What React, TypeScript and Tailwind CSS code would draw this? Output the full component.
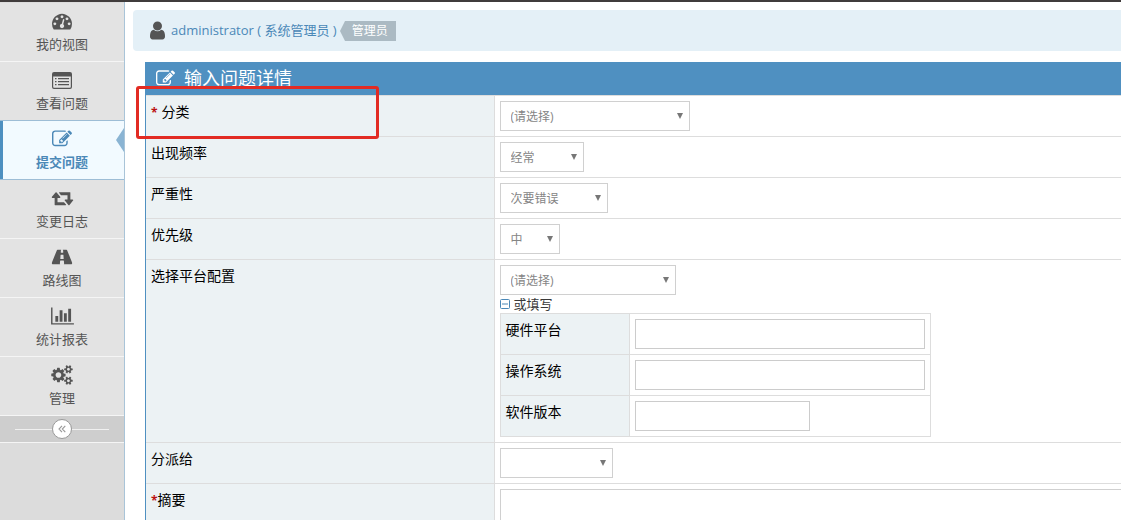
import { useState } from 'react';
import type { ReactNode } from 'react';
import clsx from 'clsx';

const EDIT_PATH =
  'M888 1184l116-116-152-152-116 116v56h96v96h56zm440-720q-16-16-33 1l-350 350q-17 17-1 33t33-1l350-350q17-17 1-33zm80 594v190q0 119-84.5 203.5t-203.5 84.5h-832q-119 0-203.5-84.5t-84.5-203.5v-832q0-119 84.5-203.5t203.5-84.5h832q63 0 117 25 15 7 18 23 3 17-9 29l-49 49q-14 14-32 8-23-6-45-6h-832q-66 0-113 47t-47 113v832q0 66 47 113t113 47h832q66 0 113-47t47-113v-126q0-13 9-22l64-64q15-15 35-7t20 29zm-96-738l288 288-672 672h-288v-288zm444 132l-92 92-288-288 92-92q28-28 68-28t68 28l152 152q28 28 28 68t-28 68z';

const DASHBOARD_PATH =
  'M384 1152q0-53-37.5-90.5t-90.5-37.5-90.5 37.5-37.5 90.5 37.5 90.5 90.5 37.5 90.5-37.5 37.5-90.5zm192-448q0-53-37.5-90.5t-90.5-37.5-90.5 37.5-37.5 90.5 37.5 90.5 90.5 37.5 90.5-37.5 37.5-90.5zm428 481l101-382q6-26-7.5-48.5t-38.5-29.5-48 6.5-30 39.5l-101 382q-60 5-107 43.5t-63 98.5q-20 77 20 146t117 89 146-20 89-117q16-60-6-117t-72-91zm660-33q0-53-37.5-90.5t-90.5-37.5-90.5 37.5-37.5 90.5 37.5 90.5 90.5 37.5 90.5-37.5 37.5-90.5zm-640-640q0-53-37.5-90.5t-90.5-37.5-90.5 37.5-37.5 90.5 37.5 90.5 90.5 37.5 90.5-37.5 37.5-90.5zm448 192q0-53-37.5-90.5t-90.5-37.5-90.5 37.5-37.5 90.5 37.5 90.5 90.5 37.5 90.5-37.5 37.5-90.5zm320 448q0 261-141 483-19 29-54 29h-1402q-35 0-54-29-141-221-141-483 0-182 71-348t191-286 286-191 348-71 348 71 286 191 191 286 71 348z';

const RETWEET_PATH =
  'M1344 1504q0 13-9.5 22.5t-22.5 9.5h-960q-8 0-13.5-2t-9-7-5.5-8-3-11.5-1-11.5v-600h-192q-26 0-45-19t-19-45q0-24 15-41l320-384q19-22 49-22t49 22l320 384q15 17 15 41 0 26-19 45t-45 19h-192v384h576q16 0 25 11l160 192q7 10 7 21zm640-416q0 24-15 41l-320 384q-20 23-49 23t-49-23l-320-384q-15-17-15-41 0-26 19-45t45-19h192v-384h-576q-16 0-25-12l-160-192q-7-9-7-20 0-13 9.5-22.5t22.5-9.5h960q8 0 13.5 2t9 7 5.5 8 3 11.5 1 11.5v600h192q26 0 45 19t19 45z';

const ROAD_PATH =
  'M1111 1048v-4l-24-320q-1-13-11-22.5t-23-9.5h-186q-13 0-23 9.5t-11 22.5l-24 320v4q-1 12 8 20t21 8h244q12 0 21-8t8-20zM1870 1463q0 73-46 73h-704q13 0 22-9.5t8-22.5l-20-256q-1-13-11-22.5t-23-9.5h-272q-13 0-23 9.5t-11 22.5l-20 256q-1 13 8 22.5t22 9.5h-704q-46 0-46-73 0-54 26-116l417-1044q8-19 26-33t38-14h339q-13 0-23 9.5t-11 22.5l-15 192q-1 14 8 23t22 9h166q13 0 22-9t8-23l-15-192q-1-13-11-22.5t-23-9.5h339q20 0 38 14t26 33l417 1044q26 62 26 116z';

const CHART_PATH =
  'M640 896v512h-256v-512h256zM1024 384v1024h-256v-1024h256zM2048 1536v128h-2048v-1536h128v1408h1920zM1408 640v768h-256v-768h256zM1792 256v1152h-256v-1152h256z';

const COGS_PATH =
  'M896 896q0-106-75-181t-181-75-181 75-75 181 75 181 181 75 181-75 75-181zm768 512q0-52-38-90t-90-38-90 38-38 90q0 53 37.5 90.5t90.5 37.5 90.5-37.5 37.5-90.5zm0-1024q0-52-38-90t-90-38-90 38-38 90q0 53 37.5 90.5t90.5 37.5 90.5-37.5 37.5-90.5zm-384 421v185q0 10-7 19.5t-16 10.5l-155 24q-11 35-32 76 34 48 90 115 7 11 7 20 0 12-7 19-23 30-82.5 89.5t-78.5 59.5q-11 0-21-7l-115-90q-37 19-77 31-11 108-23 155-7 24-30 24h-186q-11 0-20-7.5t-10-17.5l-23-153q-34-10-75-31l-118 89q-7 7-20 7-11 0-21-8-144-133-144-160 0-9 7-19 10-14 41-53t47-61q-23-44-35-82l-152-24q-10-1-17-9.5t-7-19.5v-185q0-10 7-19.5t16-10.5l155-24q11-35 32-76-34-48-90-115-7-11-7-20 0-12 7-20 22-30 82-89t79-59q11 0 21 7l115 90q34-18 77-32 11-108 23-154 7-24 30-24h186q11 0 20 7.5t10 17.5l23 153q34 10 75 31l118-89q8-7 20-7 11 0 21 8 144 133 144 160 0 9-7 19-12 16-42 54t-45 60q23 48 34 82l152 23q10 2 17 10.5t7 19.5zm640 533v140q0 16-149 31-12 27-30 52 51 113 51 138 0 4-4 7-122 71-124 71-8 0-46-47t-52-68q-20 2-30 2t-30-2q-14 21-52 68t-46 47q-2 0-124-71-4-3-4-7 0-25 51-138-18-25-30-52-149-15-149-31v-140q0-16 149-31 13-29 30-52-51-113-51-138 0-4 4-7 4-2 35-20t59-34 30-16q8 0 46 46.5t52 67.5q20-2 30-2t30 2q51-71 92-112l6-2q4 0 124 70 4 3 4 7 0 25-51 138 17 23 30 52 149 15 149 31zm0-1024v140q0 16-149 31-12 27-30 52 51 113 51 138 0 4-4 7-122 71-124 71-8 0-46-47t-52-68q-20 2-30 2t-30-2q-14 21-52 68t-46 47q-2 0-124-71-4-3-4-7 0-25 51-138-18-25-30-52-149-15-149-31v-140q0-16 149-31 13-29 30-52-51-113-51-138 0-4 4-7 4-2 35-20t59-34 30-16q8 0 46 46.5t52 67.5q20-2 30-2t30 2q51-71 92-112l6-2q4 0 124 70 4 3 4 7 0 25-51 138 17 23 30 52 149 15 149 31z';

const USER_PATH =
  'M1536 1399q0 109-62.5 187t-150.5 78h-854q-88 0-150.5-78t-62.5-187q0-85 8.5-160.5t31.5-152 58.5-131 94-89 134.5-34.5q131 128 313 128t313-128q76 0 134.5 34.5t94 89 58.5 131 31.5 152 8.5 160.5zm-256-887q0 159-112.5 271.5t-271.5 112.5-271.5-112.5-112.5-271.5 112.5-271.5 271.5-112.5 271.5 112.5 112.5 271.5z';

function Glyph({ d, width = 1792, className }: { d: string; width?: number; className?: string }) {
  return (
    <svg viewBox={`0 0 ${width} 1792`} fill="currentColor" className={className} aria-hidden="true">
      <path d={d} />
    </svg>
  );
}

function ListIcon() {
  return (
    <svg viewBox="0 0 20 17" fill="currentColor" className="h-[17px] w-5" aria-hidden="true">
      <path
        fillRule="evenodd"
        d="M2 0h16a2 2 0 0 1 2 2v13a2 2 0 0 1-2 2H2a2 2 0 0 1-2-2V2a2 2 0 0 1 2-2zM1.2 4.5V15a.8.8 0 0 0 .8.8h16a.8.8 0 0 0 .8-.8V4.5z"
      />
      <path d="M3 6h1.5v1.3H3zM6 6h11v1.3H6zM3 9h1.5v1.3H3zM6 9h11v1.3H6zM3 12h1.5v1.3H3zM6 12h11v1.3H6z" />
    </svg>
  );
}

const navItems: { id: string; label: string; icon: ReactNode }[] = [
  { id: 'view', label: '我的视图', icon: <Glyph d={DASHBOARD_PATH} className="size-5" /> },
  { id: 'list', label: '查看问题', icon: <ListIcon /> },
  { id: 'report', label: '提交问题', icon: <Glyph d={EDIT_PATH} className="size-5" /> },
  { id: 'log', label: '变更日志', icon: <Glyph d={RETWEET_PATH} width={2048} className="h-5 w-[23px]" /> },
  { id: 'road', label: '路线图', icon: <Glyph d={ROAD_PATH} width={1920} className="h-5 w-[22px]" /> },
  { id: 'stats', label: '统计报表', icon: <Glyph d={CHART_PATH} width={2048} className="h-5 w-[23px]" /> },
  { id: 'manage', label: '管理', icon: <Glyph d={COGS_PATH} width={1920} className="h-5 w-[22px]" /> },
];

function Sidebar() {
  const [active, setActive] = useState('report');

  return (
    <aside className="flex w-[125px] shrink-0 flex-col border-r border-[#a9c4d8] bg-[#dcdcdc] pt-px">
      <nav>
        {navItems.map((item) => (
          <a
            key={item.id}
            href={`#${item.id}`}
            onClick={() => setActive(item.id)}
            className={clsx(
              'relative flex h-[59px] flex-col items-center border-b pt-2 text-[13px] leading-5',
              active === item.id
                ? '-mt-px h-[60px] border-t border-[#9dbdd6] bg-[#f2faff] font-bold text-[#4b88b7]'
                : 'border-[#f5f5f5] bg-[#e3e3e3] text-[#555]'
            )}
          >
            {active === item.id && <span className="absolute inset-y-0 left-0 w-[3px] bg-[#4d8fc0]" />}
            <span className="flex h-5 items-center justify-center">{item.icon}</span>
            <span className="mt-[3px]">{item.label}</span>
            {active === item.id && (
              <svg viewBox="0 0 8 24" className="absolute top-[7px] right-0 h-6 w-2" aria-hidden="true">
                <path d="M8 0v24L0 12z" fill="#8ab4d3" />
              </svg>
            )}
          </a>
        ))}
      </nav>
      <div className="flex h-[27px] items-center border-b border-[#f5f5f5] bg-[#cecece] px-[15px]">
        <span className="h-px flex-1 bg-[#f0f0f0]" />
        <button
          type="button"
          aria-label="收起菜单"
          className="flex size-5 items-center justify-center rounded-full border border-[#999] bg-white text-[#999]"
        >
          <svg viewBox="0 0 8 8" fill="none" stroke="currentColor" strokeWidth="1.1" className="size-2">
            <path d="M4 .8L1 4l3 3.2M7.3.8L4.300 4l3 3.2" />
          </svg>
        </button>
        <span className="h-px flex-1 bg-[#f0f0f0]" />
      </div>
    </aside>
  );
}

function Select({ id, options, className }: { id: string; options: string[]; className: string }) {
  return (
    <div className={clsx('relative h-[30px]', className)}>
      <select
        id={id}
        className="block size-full appearance-none border border-[#d0d0d0] bg-white pt-[2px] pr-5 pl-[10px] text-xs text-[#858585]"
      >
        {options.map((o) => (
          <option key={o}>{o}</option>
        ))}
      </select>
      <svg viewBox="0 0 6 6" className="pointer-events-none absolute top-3 right-[7px] size-[6px]" aria-hidden="true">
        <path d="M0 0h6L3 6z" fill="#777" />
      </svg>
    </div>
  );
}

function Row({ id, label, required, children }: { id: string; label: string; required?: ReactNode; children: ReactNode }) {
  return (
    <tr className="border-t border-[#ddd]">
      <th scope="row" className="border-r border-[#ddd] bg-[#ecf2f4] px-[5px] pt-[5px] text-left align-top font-normal">
        <label htmlFor={id} className="block leading-[22px]">
          {required}
          {label}
        </label>
      </th>
      <td className="py-[5px] pl-[5px] align-top">{children}</td>
    </tr>
  );
}

function PlatformTable() {
  const fields = [
    { id: 'platform', label: '硬件平台', width: 'w-[290px]' },
    { id: 'os', label: '操作系统', width: 'w-[290px]' },
    { id: 'os_build', label: '软件版本', width: 'w-[175px]' },
  ];

  return (
    <table className="w-[431px] border-collapse border border-[#ddd]">
      <tbody>
        {fields.map((f) => (
          <tr key={f.id} className="border-t border-[#ddd]">
            <th scope="row" className="w-[129px] border-r border-[#ddd] bg-[#ecf2f4] px-[5px] pt-[5px] text-left align-top font-normal">
              <label htmlFor={f.id} className="block leading-[22px]">{f.label}</label>
            </th>
            <td className="p-[5px]">
              <input id={f.id} type="text" className={clsx('block h-[30px] border border-[#ccc] bg-white px-1', f.width)} />
            </td>
          </tr>
        ))}
      </tbody>
    </table>
  );
}

function ReportForm() {
  const [open, setOpen] = useState(true);

  return (
    <form className="relative mt-[11px] ml-5 border-l border-[#4f90c1]">
      <h4 className="-ml-px flex h-[33px] items-center bg-[#4f90c1] pb-px pl-[11px] text-lg text-white">
        <Glyph d={EDIT_PATH} className="mr-[9px] size-[19px]" />
        输入问题详情
      </h4>
      <table className="w-full table-fixed border-collapse text-sm text-black">
        <colgroup>
          <col className="w-[348px]" />
          <col />
        </colgroup>
        <tbody>
          <Row id="category" label="分类" required={<span className="mr-1 text-xs font-bold text-[#b11]">*</span>}>
            <Select id="category" options={['(请选择)']} className="w-[190px]" />
          </Row>
          <Row id="frequency" label="出现频率">
            <Select id="frequency" options={['经常', '有时', '随机']} className="w-[84px]" />
          </Row>
          <Row id="severity" label="严重性">
            <Select id="severity" options={['次要错误', '严重错误']} className="w-[108px]" />
          </Row>
          <Row id="priority" label="优先级">
            <Select id="priority" options={['中', '低', '高']} className="w-[60px]" />
          </Row>
          <Row id="profile" label="选择平台配置">
            <Select id="profile" options={['(请选择)']} className="w-[176px]" />
            <button
              type="button"
              onClick={() => setOpen(!open)}
              className="flex h-[18px] items-center gap-1 text-[13px] text-[#393939]"
            >
              <svg viewBox="0 0 10 10" fill="none" stroke="#4b88b7" className="size-[10px]" aria-hidden="true">
                <rect x="0.5" y="0.5" width="9" height="9" rx="1" />
                <path d={open ? 'M2 5h6' : 'M2 5h6M5 2v6'} />
              </svg>
              或填写
            </button>
            {open && <PlatformTable />}
          </Row>
          <Row id="handler" label="分派给">
            <Select id="handler" options={['']} className="w-[113px]" />
          </Row>
          <Row id="summary" label="摘要" required={<span className="text-xs font-bold text-[#b11]">*</span>}>
            <input id="summary" type="text" className="block h-[34px] w-full border border-r-0 border-[#d0d0d0] bg-white px-1" />
          </Row>
        </tbody>
      </table>
      {/* highlight over the category row */}
      <div className="pointer-events-none absolute top-6 -left-[10px] h-[53px] w-[243px] rounded-[3px] border-3 border-[#e22b23]" />
    </form>
  );
}

export default function App() {
  return (
    <div className="flex h-screen flex-col overflow-hidden border-t-2 border-[#403c3c] bg-white font-['Open_Sans','Noto_Sans_CJK_SC',sans-serif] text-[13px]">
      <div className="flex min-h-0 flex-1">
        <Sidebar />
        <main className="min-w-0 flex-1">
          <div className="mt-2 ml-2 flex h-[41px] items-center rounded-l bg-[#e4f0f7] pl-[14px]">
            <Glyph d={USER_PATH} className="size-[21px] text-[#555]" />
            <a href="#account" className="ml-[3px] text-[#4b88b7]">
              administrator ( 系统管理员 )
            </a>
            <span className="ml-[3px] flex h-5 items-center">
              <svg viewBox="0 0 5 20" className="h-5 w-[5px]" aria-hidden="true">
                <path d="M5 0v20L0 10z" fill="#abbac3" />
              </svg>
              <span className="flex h-5 items-center bg-[#abbac3] pr-2 pl-[7px] text-xs text-white">管理员</span>
            </span>
          </div>
          <ReportForm />
        </main>
      </div>
    </div>
  );
}
